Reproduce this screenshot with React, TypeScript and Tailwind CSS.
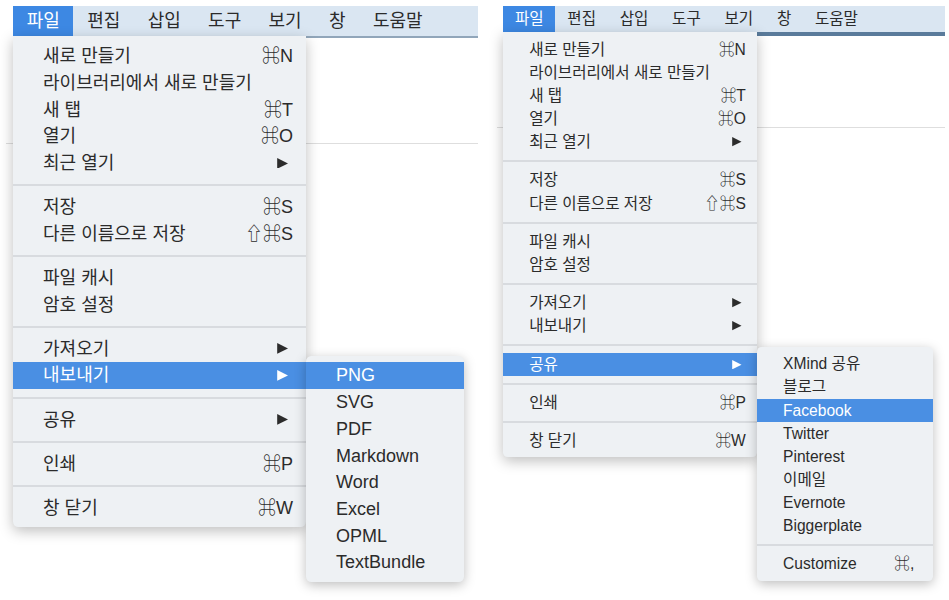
import type { ReactNode } from "react";

type Row =
  | { label: string; shortcut?: string; arrow?: boolean; active?: boolean; sub?: ReactNode }
  | "sep";

const FONT = "[font-family:'Liberation_Sans','Noto_Sans_CJK_KR','DejaVu_Sans',sans-serif]";

const fileMenu = (active: string, sub: ReactNode): Row[] => [
  { label: "새로 만들기", shortcut: "⌘N" },
  { label: "라이브러리에서 새로 만들기" },
  { label: "새 탭", shortcut: "⌘T" },
  { label: "열기", shortcut: "⌘O" },
  { label: "최근 열기", arrow: true },
  "sep",
  { label: "저장", shortcut: "⌘S" },
  { label: "다른 이름으로 저장", shortcut: "⇧⌘S" },
  "sep",
  { label: "파일 캐시" },
  { label: "암호 설정" },
  "sep",
  { label: "가져오기", arrow: true },
  { label: "내보내기", arrow: true, active: active === "내보내기", sub: active === "내보내기" ? sub : null },
  "sep",
  { label: "공유", arrow: true, active: active === "공유", sub: active === "공유" ? sub : null },
  "sep",
  { label: "인쇄", shortcut: "⌘P" },
  "sep",
  { label: "창 닫기", shortcut: "⌘W" },
];

function Arrow({ white }: { white?: boolean }) {
  return (
    <svg viewBox="0 0 10 10" className="w-[0.62em] h-[0.6em] mr-[0.26em]">
      <polygon points="0,0 10,5 0,10" fill={white ? "#ffffff" : "#2c2c2c"} />
    </svg>
  );
}

function MenuRows({ rows, pr = "pr-[0.72em]" }: { rows: Row[]; pr?: string }) {
  return (
    <>
      {rows.map((r, i) =>
        r === "sep" ? (
          <div key={i} className="h-[0.97em] flex items-center">
            <div className="h-[2px] w-full bg-[#d8dbdf]" />
          </div>
        ) : (
          <div
            key={i}
            className={`relative h-[1.483em] flex items-center pl-[1.67em] ${pr} ${
              r.active ? "bg-[#4a8fe3] text-white" : "text-[#2b2b2b]"
            }`}
          >
            <span className="flex-1 whitespace-nowrap">{r.label}</span>
            {r.shortcut && <span className="whitespace-nowrap">{r.shortcut}</span>}
            {r.arrow && <Arrow white={r.active} />}
            {r.sub}
          </div>
        )
      )}
    </>
  );
}

const exportSub = (
  <div className="absolute left-full top-[-0.35em] z-20 w-[8.78em] rounded-[0.3em] bg-[#eef1f4] py-[0.35em] shadow-[0_3px_12px_rgba(0,0,0,0.26)]">
    <MenuRows
      rows={[
        { label: "PNG", active: true },
        { label: "SVG" },
        { label: "PDF" },
        { label: "Markdown" },
        { label: "Word" },
        { label: "Excel" },
        { label: "OPML" },
        { label: "TextBundle" },
      ]}
    />
  </div>
);

const shareSub = (
  <div className="absolute left-full top-[-0.35em] z-20 w-[11.28em] rounded-[0.3em] bg-[#eef1f4] py-[0.33em] shadow-[0_3px_12px_rgba(0,0,0,0.26)]">
    <MenuRows
      pr="pr-[1.2em]"
      rows={[
        { label: "XMind 공유" },
        { label: "블로그" },
        { label: "Facebook", active: true },
        { label: "Twitter" },
        { label: "Pinterest" },
        { label: "이메일" },
        { label: "Evernote" },
        { label: "Biggerplate" },
        "sep",
        { label: "Customize", shortcut: "⌘," },
      ]}
    />
  </div>
);

const barItems = ["파일", "편집", "삽입", "도구", "보기", "창", "도움말"];

function Panel({ size, line, active, sub }: { size: string; line: string; active: string; sub: ReactNode }) {
  return (
    <div className={`relative ${size} ${FONT} leading-none`}>
      <div className={`relative flex h-[1.68em] ml-[0.39em] bg-[#dae6f2] ${line}`}>
        {barItems.map((b, i) => (
          <div
            key={b}
            className={`flex items-center px-[0.76em] ${i === 0 ? "bg-[#3d88e3] text-white" : "text-[#2b2b2b]"}`}
          >
            {b}
          </div>
        ))}
        <div className="absolute left-0 top-full z-10 w-[16.28em] rounded-b-[0.3em] bg-[#eef1f4] pt-[0.37em] pb-[0.3em] shadow-[0_4px_14px_rgba(0,0,0,0.26)]">
          <MenuRows rows={fileMenu(active, sub)} />
        </div>
      </div>
      <div className="h-[5.9em] bg-white border-b border-[#dedede]" />
    </div>
  );
}

export default function App() {
  return (
    <div className="w-[949px] h-[600px] bg-white overflow-hidden flex pt-[6px]">
      <div className="ml-[6px] w-[472px]">
        <Panel size="text-[18px]" line="border-b-2 border-[#91a6ba] box-content" active="내보내기" sub={exportSub} />
      </div>
      <div className="ml-[19px] w-[448px]">
        <Panel size="text-[15.6px]" line="border-b-[4px] border-[#5a7b9b] box-content" active="공유" sub={shareSub} />
      </div>
    </div>
  );
}
